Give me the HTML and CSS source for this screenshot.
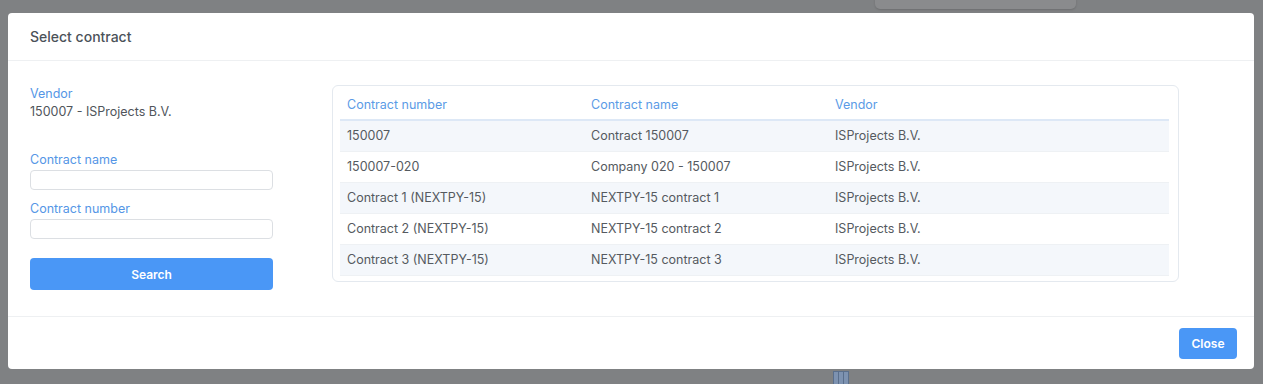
FILE: index.html
```html
<!DOCTYPE html>
<html>

<head>
    <link rel="stylesheet" href="styles.css">
</head>

<body>
    <div class="backdrop-tab"></div>
    <div class="backdrop-icon"><span></span><span></span><span></span></div>
    <div class="modal">
        <div class="modal-header">
            <span class="modal-title">Select contract</span>
        </div>

        <div class="modal-body">
            <!-- Filters -->
            <div class="filters">
                <span class="field-label">Vendor</span>
                <span class="field-value">150007 - ISProjects B.V.</span>

                <label class="field-label first-input">Contract name</label>
                <input class="text-input" type="text">

                <label class="field-label">Contract number</label>
                <input class="text-input" type="text">

                <button class="btn btn-search">Search</button>
            </div>

            <!-- Results -->
            <div class="table-card">
                <table class="contract-table">
                    <thead>
                        <tr>
                            <th>Contract number</th>
                            <th>Contract name</th>
                            <th>Vendor</th>
                        </tr>
                    </thead>
                    <tbody>
                        <tr>
                            <td>150007</td>
                            <td>Contract 150007</td>
                            <td>ISProjects B.V.</td>
                        </tr>
                        <tr>
                            <td>150007-020</td>
                            <td>Company 020 - 150007</td>
                            <td>ISProjects B.V.</td>
                        </tr>
                        <tr>
                            <td>Contract 1 (NEXTPY-15)</td>
                            <td>NEXTPY-15 contract 1</td>
                            <td>ISProjects B.V.</td>
                        </tr>
                        <tr>
                            <td>Contract 2 (NEXTPY-15)</td>
                            <td>NEXTPY-15 contract 2</td>
                            <td>ISProjects B.V.</td>
                        </tr>
                        <tr>
                            <td>Contract 3 (NEXTPY-15)</td>
                            <td>NEXTPY-15 contract 3</td>
                            <td>ISProjects B.V.</td>
                        </tr>
                    </tbody>
                </table>
            </div>
        </div>

        <div class="modal-footer">
            <button class="btn btn-close">Close</button>
        </div>
    </div>
</body>

</html>
```

FILE: styles.css
```css
* {
    box-sizing: border-box;
}

body {
    margin: 0;
    padding: 13px 9px 0 8px;
    height: 384px;
    overflow: hidden;
    background: #7f8183;
    font-family: Inter, "Noto Sans", sans-serif;
    font-size: 12.5px;
    color: #555a60;
    position: relative;
}

.backdrop-tab {
    position: absolute;
    top: -6px;
    left: 875px;
    width: 201px;
    height: 15px;
    border-radius: 5px;
    background: #8a8b8d;
    box-shadow: 0 1px 2px rgba(0, 0, 0, 0.15);
}

.backdrop-icon {
    position: absolute;
    top: 371px;
    left: 833px;
    display: flex;
    gap: 1px;
    padding: 1px;
    background: #5a6f8c;
}

.backdrop-icon span {
    width: 4px;
    height: 12px;
    background: #7d92b0;
}

.modal {
    position: relative;
    width: 1246px;
    background: #fff;
    border-radius: 4px;
}

.modal-header {
    height: 48px;
    padding-left: 22px;
    display: flex;
    align-items: center;
    border-bottom: 1px solid #eef0f2;
}

.modal-title {
    font-size: 14px;
    font-weight: 500;
    color: #4b5259;
}

.modal-body {
    display: flex;
    align-items: flex-start;
    padding: 24px 0 26px 22px;
    border-bottom: 1px solid #eef0f2;
}

.filters {
    width: 243px;
    display: flex;
    flex-direction: column;
    padding-top: 1px;
    margin-right: 59px;
}

.field-label {
    display: block;
    line-height: 16px;
    color: #5596e6;
    margin-top: 11px;
}

.filters .field-label:first-child {
    margin-top: 0;
}

.field-value {
    line-height: 16px;
    margin-top: 2px;
    color: #50555b;
}

.field-label.first-input {
    margin-top: 32px;
}

.text-input {
    height: 20px;
    margin-top: 2px;
    border: 1px solid #dcdfe3;
    border-radius: 4px;
    background: #fff;
    font: inherit;
}

.btn {
    border: none;
    border-radius: 4px;
    background: #4a97f6;
    color: #fff;
    font-family: inherit;
    font-size: 12px;
    font-weight: 600;
    cursor: pointer;
}

.btn-search {
    height: 32px;
    margin-top: 19px;
}

.table-card {
    width: 847px;
    border: 1px solid #e4e9ef;
    border-radius: 6px;
    padding: 0 9px 5px 7px;
}

.contract-table {
    width: 100%;
    border-collapse: collapse;
}

.contract-table th {
    padding: 11px 7px 6px;
    line-height: 16px;
    text-align: left;
    font-weight: 400;
    color: #5b9be6;
    border-bottom: 2px solid #dde8f6;
    width: 244px;
}

.contract-table th:last-child {
    width: auto;
}

.contract-table td {
    height: 31px;
    padding: 0 7px;
    border-bottom: 1px solid #eef1f4;
    color: #555a60;
}

.contract-table tbody tr:nth-child(odd) td {
    background: #f4f7fb;
}

.modal-footer {
    height: 52px;
    display: flex;
    justify-content: flex-end;
    align-items: center;
    padding-right: 17px;
}

.btn-close {
    width: 58px;
    height: 31px;
}
```
